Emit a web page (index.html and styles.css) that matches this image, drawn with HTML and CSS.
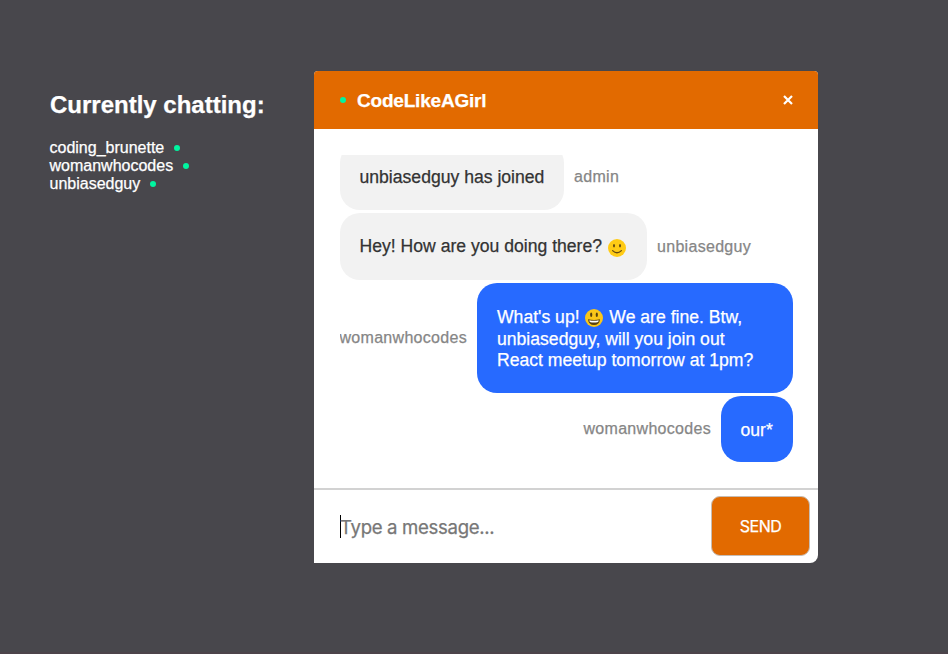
FILE: index.html
```html
<!DOCTYPE html>
<html lang="en">
<head>
<meta charset="utf-8">
<title>CodeLikeAGirl chat</title>
<link rel="stylesheet" href="styles.css">
</head>
<body>
<div class="page">
  <aside class="people">
    <h2 class="people-title">Currently chatting:</h2>
    <ul class="people-list">
      <li><span>coding_brunette</span><i class="dot"></i></li>
      <li><span>womanwhocodes</span><i class="dot"></i></li>
      <li><span>unbiasedguy</span><i class="dot"></i></li>
    </ul>
  </aside>
  <main class="chat">
    <header class="chat-head">
      <i class="dot"></i>
      <h3 class="room">CodeLikeAGirl</h3>
      <svg class="close" width="10" height="10" viewBox="0 0 10 10"><path d="M1 1L9 9M9 1L1 9" stroke="#fff" stroke-width="2.2" fill="none"/></svg>
    </header>
    <section class="messages">
      <div class="row first"><div class="bubble other b1">unbiasedguy has joined</div><span class="name">admin</span></div>
      <div class="row"><div class="bubble other b2"><span>Hey! How are you doing there?</span>
        <svg class="emoji" width="18" height="18" viewBox="0 0 18 18"><circle cx="9" cy="9" r="9" fill="#ffcb15"/><ellipse cx="6" cy="6.8" rx="1" ry="1.7" fill="#674b10"/><ellipse cx="12" cy="6.8" rx="1" ry="1.7" fill="#674b10"/><path d="M4.6 11.6Q9 15.8 13.4 11.6" stroke="#674b10" stroke-width="1.3" fill="none" stroke-linecap="round"/></svg></div><span class="name">unbiasedguy</span></div>
      <div class="row mine"><span class="name">womanwhocodes</span><div class="bubble own b3"><span>What's up!</span>
        <svg class="emoji grin" width="18" height="18" viewBox="0 0 18 18"><circle cx="9" cy="9" r="9" fill="#fbc719"/><ellipse cx="6.2" cy="5.8" rx="1.1" ry="2.2" fill="#57400f"/><ellipse cx="11.8" cy="5.8" rx="1.1" ry="2.2" fill="#57400f"/><path d="M3 10.2Q9 11.7 15 10.2Q14.4 16 9 16Q3.6 16 3 10.2Z" fill="#57400f"/><path d="M4.3 11.2Q9 12.2 13.7 11.2L13.2 13Q9 14 4.8 13Z" fill="#fff"/></svg>
        <span>We are fine. Btw,</span><br><span>unbiasedguy, will you join out</span><br><span>React meetup tomorrow at 1pm?</span></div></div>
      <div class="row mine"><span class="name">womanwhocodes</span><div class="bubble own b4">our*</div></div>
    </section>
    <form class="compose">
      <div class="field"><i class="caret"></i><span class="hint">Type a message...</span></div>
      <button class="send" type="button">SEND</button>
    </form>
  </main>
</div>
</body>
</html>
```

FILE: styles.css
```css
* { box-sizing: border-box; }
body {
  margin: 0;
  background: #48474c;
  color: #fff;
  font-family: "Liberation Sans", Helvetica, Arial, sans-serif;
  -webkit-text-stroke: 0.25px;
}
.page {
  height: 654px;
  display: flex;
  align-items: flex-start;
  padding: 71px 130px 0 50px;
  border-bottom: 2px solid #4c434a;
}
.people { width: 264px; padding-top: 20px; }
.people-title { margin: 0 0 20px; font-size: 24px; line-height: 28px; white-space: nowrap; }
.people-list { margin: 0; padding: 0; list-style: none; font-size: 16px; line-height: 18px; }
.people-list li { display: flex; align-items: center; gap: 10px; height: 18px; }
.people-list span { margin-left: -0.5px; }
.dot { width: 6px; height: 6px; border-radius: 50%; background: #00f5a0; }
.chat { width: 504px; background: #fff; border-radius: 4px 4px 8px 0; overflow: hidden; }
.chat-head {
  display: flex;
  align-items: center;
  height: 58px;
  padding: 0 25px 0 26px;
  background: #e26a00;
}
.room { margin: 0 auto 0 11px; padding-top: 1px; font-size: 19px; line-height: 22px; letter-spacing: -0.2px; }
.messages {
  height: 333px;
  margin: 26px 25px 0 26px;
  overflow: hidden;
  display: flex;
  flex-direction: column;
  gap: 3px;
}
.row { display: flex; align-items: center; gap: 10px; flex: none; }
.first { margin-top: -12px; }
.mine { justify-content: flex-end; }
.bubble {
  flex: none;
  padding: 24px 20px 0 19.5px;
  border-radius: 20px;
  font-size: 17.6px;
  line-height: 21px;
  height: 67px;
  white-space: nowrap;
}
.other { background: #f2f2f2; color: #333; }
.own { background: #276aff; color: #fff; }
.b1 { width: 224px; }
.b2 { width: 307px; padding-top: 23px; }
.b3 { width: 316px; height: 110px; padding-left: 20px; line-height: 21.5px; }
.b4 { width: 72px; height: 66px; }
.emoji { vertical-align: -5px; margin-left: 1px; }
.grin { vertical-align: -4px; margin-right: 1px; }
.name { color: #868686; font-size: 16px; line-height: 18px; letter-spacing: 0.3px; white-space: nowrap; }
.compose {
  display: flex;
  align-items: flex-start;
  height: 75px;
  padding: 6px 8px 0 26px;
  border-top: 2px solid #d2d2d2;
}
.field { flex: 1; display: flex; align-items: center; height: 61px; color: #777; font-family: Inter, sans-serif; font-size: 18.6px; letter-spacing: -0.33px; }
.caret { width: 1px; height: 23px; margin-right: -1px; background: #000; }
.hint { padding-top: 1px; }
.send {
  width: 99px;
  height: 60px;
  padding: 0;
  border: 1px solid #c6bdb5;
  border-radius: 9px;
  background: #e26a00;
  color: #fff;
  font: 16px Inter, sans-serif;
  letter-spacing: -0.5px;
  -webkit-text-stroke: 0.25px;
}
```
